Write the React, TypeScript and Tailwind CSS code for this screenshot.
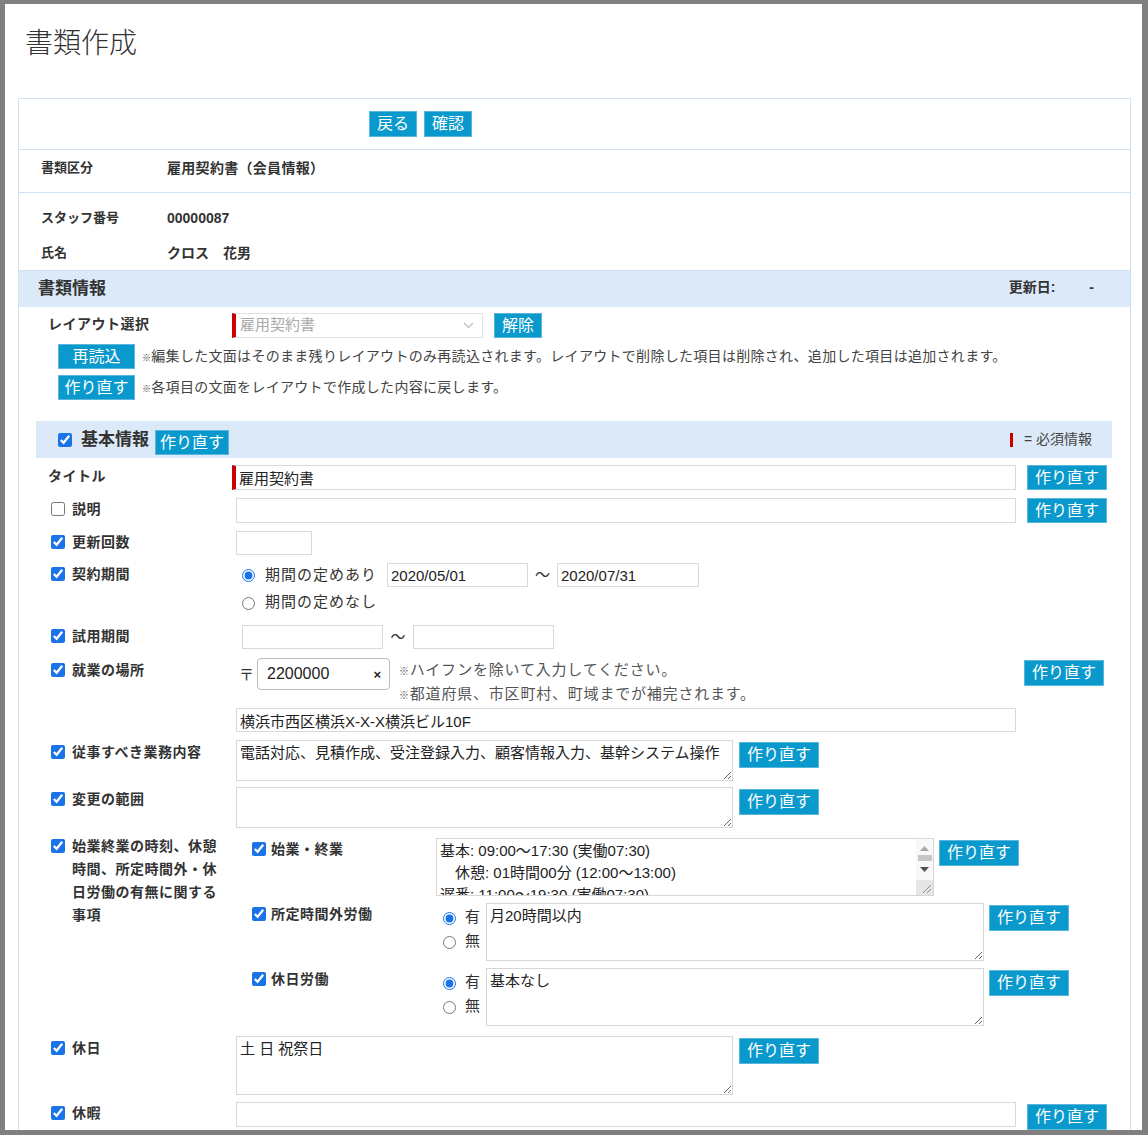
import React from "react";

type Kids = { children?: React.ReactNode };

function Btn({ children, w, h = "h-[26px]", className = "" }: Kids & { w: string; h?: string; className?: string }) {
  return (
    <button
      type="button"
      className={`${w} ${h} shrink-0 bg-[#0a99cc] border border-[#5ab7db] text-white text-[16px] leading-none flex items-center justify-center ${className}`}
    >
      {children}
    </button>
  );
}

function CheckLabel({ text, checked = true }: { text: React.ReactNode; checked?: boolean }) {
  return (
    <label className="flex items-start gap-[7px] pl-[15px]">
      <input
        type="checkbox"
        defaultChecked={checked}
        className="m-0 mt-[4px] w-[14px] h-[14px] shrink-0 accent-[#1a73e8]"
      />
      <span className="font-bold text-[14px] leading-[22px] tracking-[0.5px]">{text}</span>
    </label>
  );
}

function Row({ label, children, className = "" }: Kids & { label: React.ReactNode; className?: string }) {
  return (
    <div className={`flex items-start ${className}`}>
      <div className="w-[200px] shrink-0">{label}</div>
      <div className="flex-1 min-w-0">{children}</div>
    </div>
  );
}

const inputCls =
  "block border border-[#d9d9d9] bg-white px-[3px] text-[15px] text-[#222] outline-none box-border";
const areaCls =
  "border border-[#d6d6d6] bg-white px-[3px] py-[1px] text-[15px] leading-[22px] text-[#222] outline-none box-border block";

// Classic vertical scrollbar drawn over the schedule textarea
function ScrollBar() {
  return (
    <div className="absolute right-[1px] top-[1px] bottom-[1px] w-[17px] bg-[#f8f8f8] flex flex-col items-center">
      <svg className="mt-[7px]" width="9" height="5" viewBox="0 0 9 5">
        <path d="M0 5L4.5 0L9 5z" fill="#a8a8a8" />
      </svg>
      <div className="mt-[4px] w-[14px] h-[6px] bg-[#c6c6c6]" />
      <svg className="mt-[6px]" width="9" height="5" viewBox="0 0 9 5">
        <path d="M0 0L4.5 5L9 0z" fill="#505050" />
      </svg>
      <div className="mt-auto w-[17px] h-[15px] bg-[#e6e6e6] relative">
        <svg className="absolute right-[2px] bottom-[2px]" width="9" height="9" viewBox="0 0 9 9">
          <path d="M9 1L1 9M9 5L5 9" stroke="#8a8a8a" strokeWidth="1" />
        </svg>
      </div>
    </div>
  );
}

export default function App() {
  return (
    <div className="h-[1135px] bg-[#808080] pt-[4px] pl-[5px] pr-[6px] pb-[5px] font-['Liberation_Sans','Noto_Sans_CJK_JP',sans-serif] text-[#333]">
      <div className="h-full bg-white overflow-hidden">
        <h1 className="pt-[20px] pl-[20px] text-[28px] leading-[40px] font-light text-[#333]">書類作成</h1>

        <div className="mt-[34px] ml-[13px] mr-[11px] border border-[#cfe1f3]">
          {/* action buttons */}
          <div className="h-[51px] flex items-center gap-[7px] pl-[350px] border-b border-[#cfe1f3]">
            <Btn w="w-[48px]">戻る</Btn>
            <Btn w="w-[48px]">確認</Btn>
          </div>

          {/* document type */}
          <div className="h-[43px] flex items-start pt-[8px] pl-[22px] border-b border-[#cfe1f3] text-[13px] leading-[20px] font-bold">
            <span className="w-[126px]">書類区分</span>
            <span className="text-[14px] tracking-[0.3px]">雇用契約書（会員情報）</span>
          </div>

          {/* staff */}
          <div className="pt-[15px] pb-[7px] pl-[22px] text-[13px] leading-[20px] font-bold">
            <div className="flex">
              <span className="w-[126px]">スタッフ番号</span>
              <span className="text-[14px]">00000087</span>
            </div>
            <div className="flex mt-[15px]">
              <span className="w-[126px]">氏名</span>
              <span className="text-[14px]">クロス　花男</span>
            </div>
          </div>

          {/* document info header */}
          <div className="h-[37px] bg-[#dce9f8] border-t border-[#cfe1f3] flex items-center pl-[19px] pr-[36px]">
            <span className="text-[17px] font-bold">書類情報</span>
            <span className="ml-auto text-[14px] font-bold -mt-[3px]">更新日:</span>
            <span className="ml-[34px] text-[14px] font-bold -mt-[3px]">-</span>
          </div>

          <div className="pl-[17px] pr-[18px]">
            {/* layout select */}
            <div className="flex items-start mt-[6px]">
              <div className="w-[200px] shrink-0 pl-[12px] text-[14px] leading-[22px] font-bold tracking-[0.5px]">レイアウト選択</div>
              <div className="-ml-[4px] w-[251px] h-[25px] border border-[#e2e2e2] border-l-[4px] border-l-[#cc0000] flex items-center pl-[4px] pr-[8px] text-[15px] text-[#aaa]">
                <span>雇用契約書</span>
                <svg className="ml-auto" width="11" height="7" viewBox="0 0 11 7" fill="none">
                  <path d="M1 1l4.5 4.5L10 1" stroke="#bbb" strokeWidth="1.2" />
                </svg>
              </div>
              <Btn w="w-[48px]" h="h-[25px]" className="ml-[11px]">解除</Btn>
            </div>

            <div className="flex items-center mt-[6px] pl-[22px]">
              <Btn w="w-[77px]" h="h-[25px]">再読込</Btn>
              <span className="ml-[7px] text-[14px] tracking-[0.3px] text-[#444]">
                <span className="text-[9px]">※</span>編集した文面はそのまま残りレイアウトのみ再読込されます。レイアウトで削除した項目は削除され、追加した項目は追加されます。
              </span>
            </div>
            <div className="flex items-center mt-[6px] pl-[22px]">
              <Btn w="w-[77px]" h="h-[25px]">作り直す</Btn>
              <span className="ml-[7px] text-[14px] tracking-[0.3px] text-[#444]">
                <span className="text-[9px]">※</span>各項目の文面をレイアウトで作成した内容に戻します。
              </span>
            </div>

            {/* basic info header */}
            <div className="mt-[21px] h-[37px] bg-[#dce9f8] flex items-center pl-[22px] pr-[20px]">
              <input type="checkbox" defaultChecked className="m-0 w-[14px] h-[14px] accent-[#1a73e8]" />
              <span className="ml-[9px] text-[17px] font-bold">基本情報</span>
              <Btn w="w-[74px]" h="h-[25px]" className="ml-[6px] mt-[6px] text-[15px]">作り直す</Btn>
              <span className="ml-auto w-[3px] h-[14px] bg-[#cc0000]" />
              <span className="ml-[11px] text-[14px] text-[#444]">= 必須情報</span>
            </div>

            {/* title */}
            <Row
              className="mt-[7px]"
              label={<div className="pl-[12px] text-[14px] leading-[22px] font-bold tracking-[0.5px]">タイトル</div>}
            >
              <div className="flex items-start">
                <input className={`${inputCls} h-[25px] -ml-[4px] w-[784px] border-l-[4px] border-l-[#cc0000]`} defaultValue="雇用契約書" />
                <Btn w="w-[80px]" h="h-[25px]" className="ml-[11px]">作り直す</Btn>
              </div>
            </Row>

            {/* description */}
            <Row className="mt-[8px]" label={<CheckLabel text="説明" checked={false} />}>
              <div className="flex items-start">
                <input className={`${inputCls} h-[25px] w-[780px]`} />
                <Btn w="w-[80px]" h="h-[25px]" className="ml-[11px]">作り直す</Btn>
              </div>
            </Row>

            {/* renewal count */}
            <Row className="mt-[8px]" label={<CheckLabel text="更新回数" />}>
              <input className={`${inputCls} w-[76px] h-[24px]`} />
            </Row>

            {/* contract period */}
            <Row className="mt-[8px]" label={<CheckLabel text="契約期間" />}>
              <div className="flex items-center h-[24px]">
                <input type="radio" name="period" defaultChecked className="m-0 ml-[6px] w-[13px] h-[13px] accent-[#1a73e8]" />
                <span className="ml-[10px] w-[112px] text-[15px] tracking-[1px]">期間の定めあり</span>
                <input className={`${inputCls} ml-[10px] w-[141px] h-[24px]`} defaultValue="2020/05/01" />
                <span className="w-[29px] text-center text-[15px]">〜</span>
                <input className={`${inputCls} w-[142px] h-[24px]`} defaultValue="2020/07/31" />
              </div>
              <div className="flex items-center h-[24px] mt-[3px]">
                <input type="radio" name="period" className="m-0 ml-[6px] mt-[3px] w-[13px] h-[13px]" />
                <span className="ml-[10px] text-[15px] tracking-[1px]">期間の定めなし</span>
              </div>
            </Row>

            {/* trial period */}
            <Row className="mt-[11px]" label={<CheckLabel text="試用期間" />}>
              <div className="flex items-center pl-[6px]">
                <input className={`${inputCls} w-[141px] h-[24px]`} />
                <span className="w-[30px] text-center text-[15px]">〜</span>
                <input className={`${inputCls} w-[141px] h-[24px]`} />
              </div>
            </Row>

            {/* workplace */}
            <Row className="mt-[9px]" label={<div className="pt-[1px]"><CheckLabel text="就業の場所" /></div>}>
              <div className="flex items-start h-[48px]">
                <span className="w-[21px] pt-[6px] text-center text-[15px]">〒</span>
                <div className="relative w-[133px] h-[32px] rounded-[4px] border border-[#bdbdbd] flex items-center pl-[9px] text-[16px] text-[#222]">
                  2200000
                  <span className="absolute right-[8px] top-[6px] text-[13px] font-bold text-[#222]">×</span>
                </div>
                <div className="ml-[9px] text-[15px] tracking-[0.8px] text-[#555]">
                  <div className="h-[24px] leading-[24px]"><span className="text-[10px] leading-none">※</span>ハイフンを除いて入力してください。</div>
                  <div className="h-[24px] leading-[24px]"><span className="text-[10px] leading-none">※</span>都道府県、市区町村、町域までが補完されます。</div>
                </div>
                <Btn w="w-[80px]" className="ml-auto mr-[8px] mt-[2px]">作り直す</Btn>
              </div>
              <input className={`${inputCls} mt-[2px] w-[780px] h-[24px]`} defaultValue="横浜市西区横浜X-X-X横浜ビル10F" />
            </Row>

            {/* duties */}
            <Row className="mt-[8px]" label={<div className="pt-[1px]"><CheckLabel text="従事すべき業務内容" /></div>}>
              <div className="flex items-start">
                <textarea className={`${areaCls} w-[497px] h-[41px]`} defaultValue="電話対応、見積作成、受注登録入力、顧客情報入力、基幹システム操作" />
                <Btn w="w-[80px]" className="ml-[6px] mt-[2px]">作り直す</Btn>
              </div>
            </Row>

            {/* scope of change */}
            <Row className="mt-[6px]" label={<div className="pt-[1px]"><CheckLabel text="変更の範囲" /></div>}>
              <div className="flex items-start">
                <textarea className={`${areaCls} w-[497px] h-[41px]`} />
                <Btn w="w-[80px]" className="ml-[6px] mt-[2px]">作り直す</Btn>
              </div>
            </Row>

            {/* working hours */}
            <Row
              className="mt-[10px]"
              label={
                <label className="flex items-start gap-[7px] pl-[15px] -mt-[3px]">
                  <input type="checkbox" defaultChecked className="m-0 mt-[4px] w-[14px] h-[14px] shrink-0 accent-[#1a73e8]" />
                  <span className="w-[150px] font-bold text-[14px] leading-[23px] tracking-[0.5px]">
                    始業終業の時刻、休憩時間、所定時間外・休日労働の有無に関する事項
                  </span>
                </label>
              }
            >
              <div className="flex items-start">
                <div className="w-[200px] shrink-0 pl-[16px]">
                  <label className="flex items-start gap-[5px]">
                    <input type="checkbox" defaultChecked className="m-0 mt-[4px] w-[14px] h-[14px] accent-[#1a73e8]" />
                    <span className="font-bold text-[14px] leading-[22px] tracking-[0.5px]">始業・終業</span>
                  </label>
                </div>
                <div className="relative">
                  <textarea
                    className={`${areaCls} w-[498px] h-[58px] overflow-hidden pr-[20px] resize-none`}
                    defaultValue={"基本: 09:00〜17:30 (実働07:30)\n　休憩: 01時間00分 (12:00〜13:00)\n遅番: 11:00〜19:30 (実働07:30)\n　休憩: 01時間00分 (14:00〜15:00)"}
                  />
                  <ScrollBar />
                </div>
                <Btn w="w-[80px]" className="ml-[5px] mt-[2px]">作り直す</Btn>
              </div>

              <div className="flex items-start mt-[7px]">
                <div className="w-[200px] shrink-0 pl-[16px]">
                  <label className="flex items-start gap-[5px]">
                    <input type="checkbox" defaultChecked className="m-0 mt-[4px] w-[14px] h-[14px] accent-[#1a73e8]" />
                    <span className="font-bold text-[14px] leading-[22px] tracking-[0.5px]">所定時間外労働</span>
                  </label>
                </div>
                <div className="w-[50px] shrink-0 pt-[2px] text-[15px] leading-[24px]">
                  <div className="flex items-center">
                    <input type="radio" name="ot" defaultChecked className="m-0 ml-[7px] mt-[2px] w-[13px] h-[13px] accent-[#1a73e8]" />
                    <span className="ml-[9px]">有</span>
                  </div>
                  <div className="flex items-center">
                    <input type="radio" name="ot" className="m-0 ml-[7px] mt-[2px] w-[13px] h-[13px]" />
                    <span className="ml-[9px]">無</span>
                  </div>
                </div>
                <textarea className={`${areaCls} w-[498px] h-[58px]`} defaultValue="月20時間以内" />
                <Btn w="w-[80px]" className="ml-[5px] mt-[2px]">作り直す</Btn>
              </div>

              <div className="flex items-start mt-[7px]">
                <div className="w-[200px] shrink-0 pl-[16px]">
                  <label className="flex items-start gap-[5px]">
                    <input type="checkbox" defaultChecked className="m-0 mt-[4px] w-[14px] h-[14px] accent-[#1a73e8]" />
                    <span className="font-bold text-[14px] leading-[22px] tracking-[0.5px]">休日労働</span>
                  </label>
                </div>
                <div className="w-[50px] shrink-0 pt-[2px] text-[15px] leading-[24px]">
                  <div className="flex items-center">
                    <input type="radio" name="hw" defaultChecked className="m-0 ml-[7px] mt-[2px] w-[13px] h-[13px] accent-[#1a73e8]" />
                    <span className="ml-[9px]">有</span>
                  </div>
                  <div className="flex items-center">
                    <input type="radio" name="hw" className="m-0 ml-[7px] mt-[2px] w-[13px] h-[13px]" />
                    <span className="ml-[9px]">無</span>
                  </div>
                </div>
                <textarea className={`${areaCls} w-[498px] h-[58px]`} defaultValue="基本なし" />
                <Btn w="w-[80px]" className="ml-[5px] mt-[2px]">作り直す</Btn>
              </div>
            </Row>

            {/* holidays */}
            <Row className="mt-[10px]" label={<div className="pt-[1px]"><CheckLabel text="休日" /></div>}>
              <div className="flex items-start">
                <textarea className={`${areaCls} w-[497px] h-[59px]`} defaultValue="土 日 祝祭日" />
                <Btn w="w-[80px]" className="ml-[6px] mt-[2px]">作り直す</Btn>
              </div>
            </Row>

            {/* leave */}
            <Row className="mt-[7px]" label={<CheckLabel text="休暇" />}>
              <div className="flex items-start">
                <input className={`${inputCls} h-[25px] w-[780px]`} />
                <Btn w="w-[80px]" className="ml-[11px] mt-[2px]">作り直す</Btn>
              </div>
            </Row>

            <div className="h-[40px]" />
          </div>
        </div>
      </div>
    </div>
  );
}
